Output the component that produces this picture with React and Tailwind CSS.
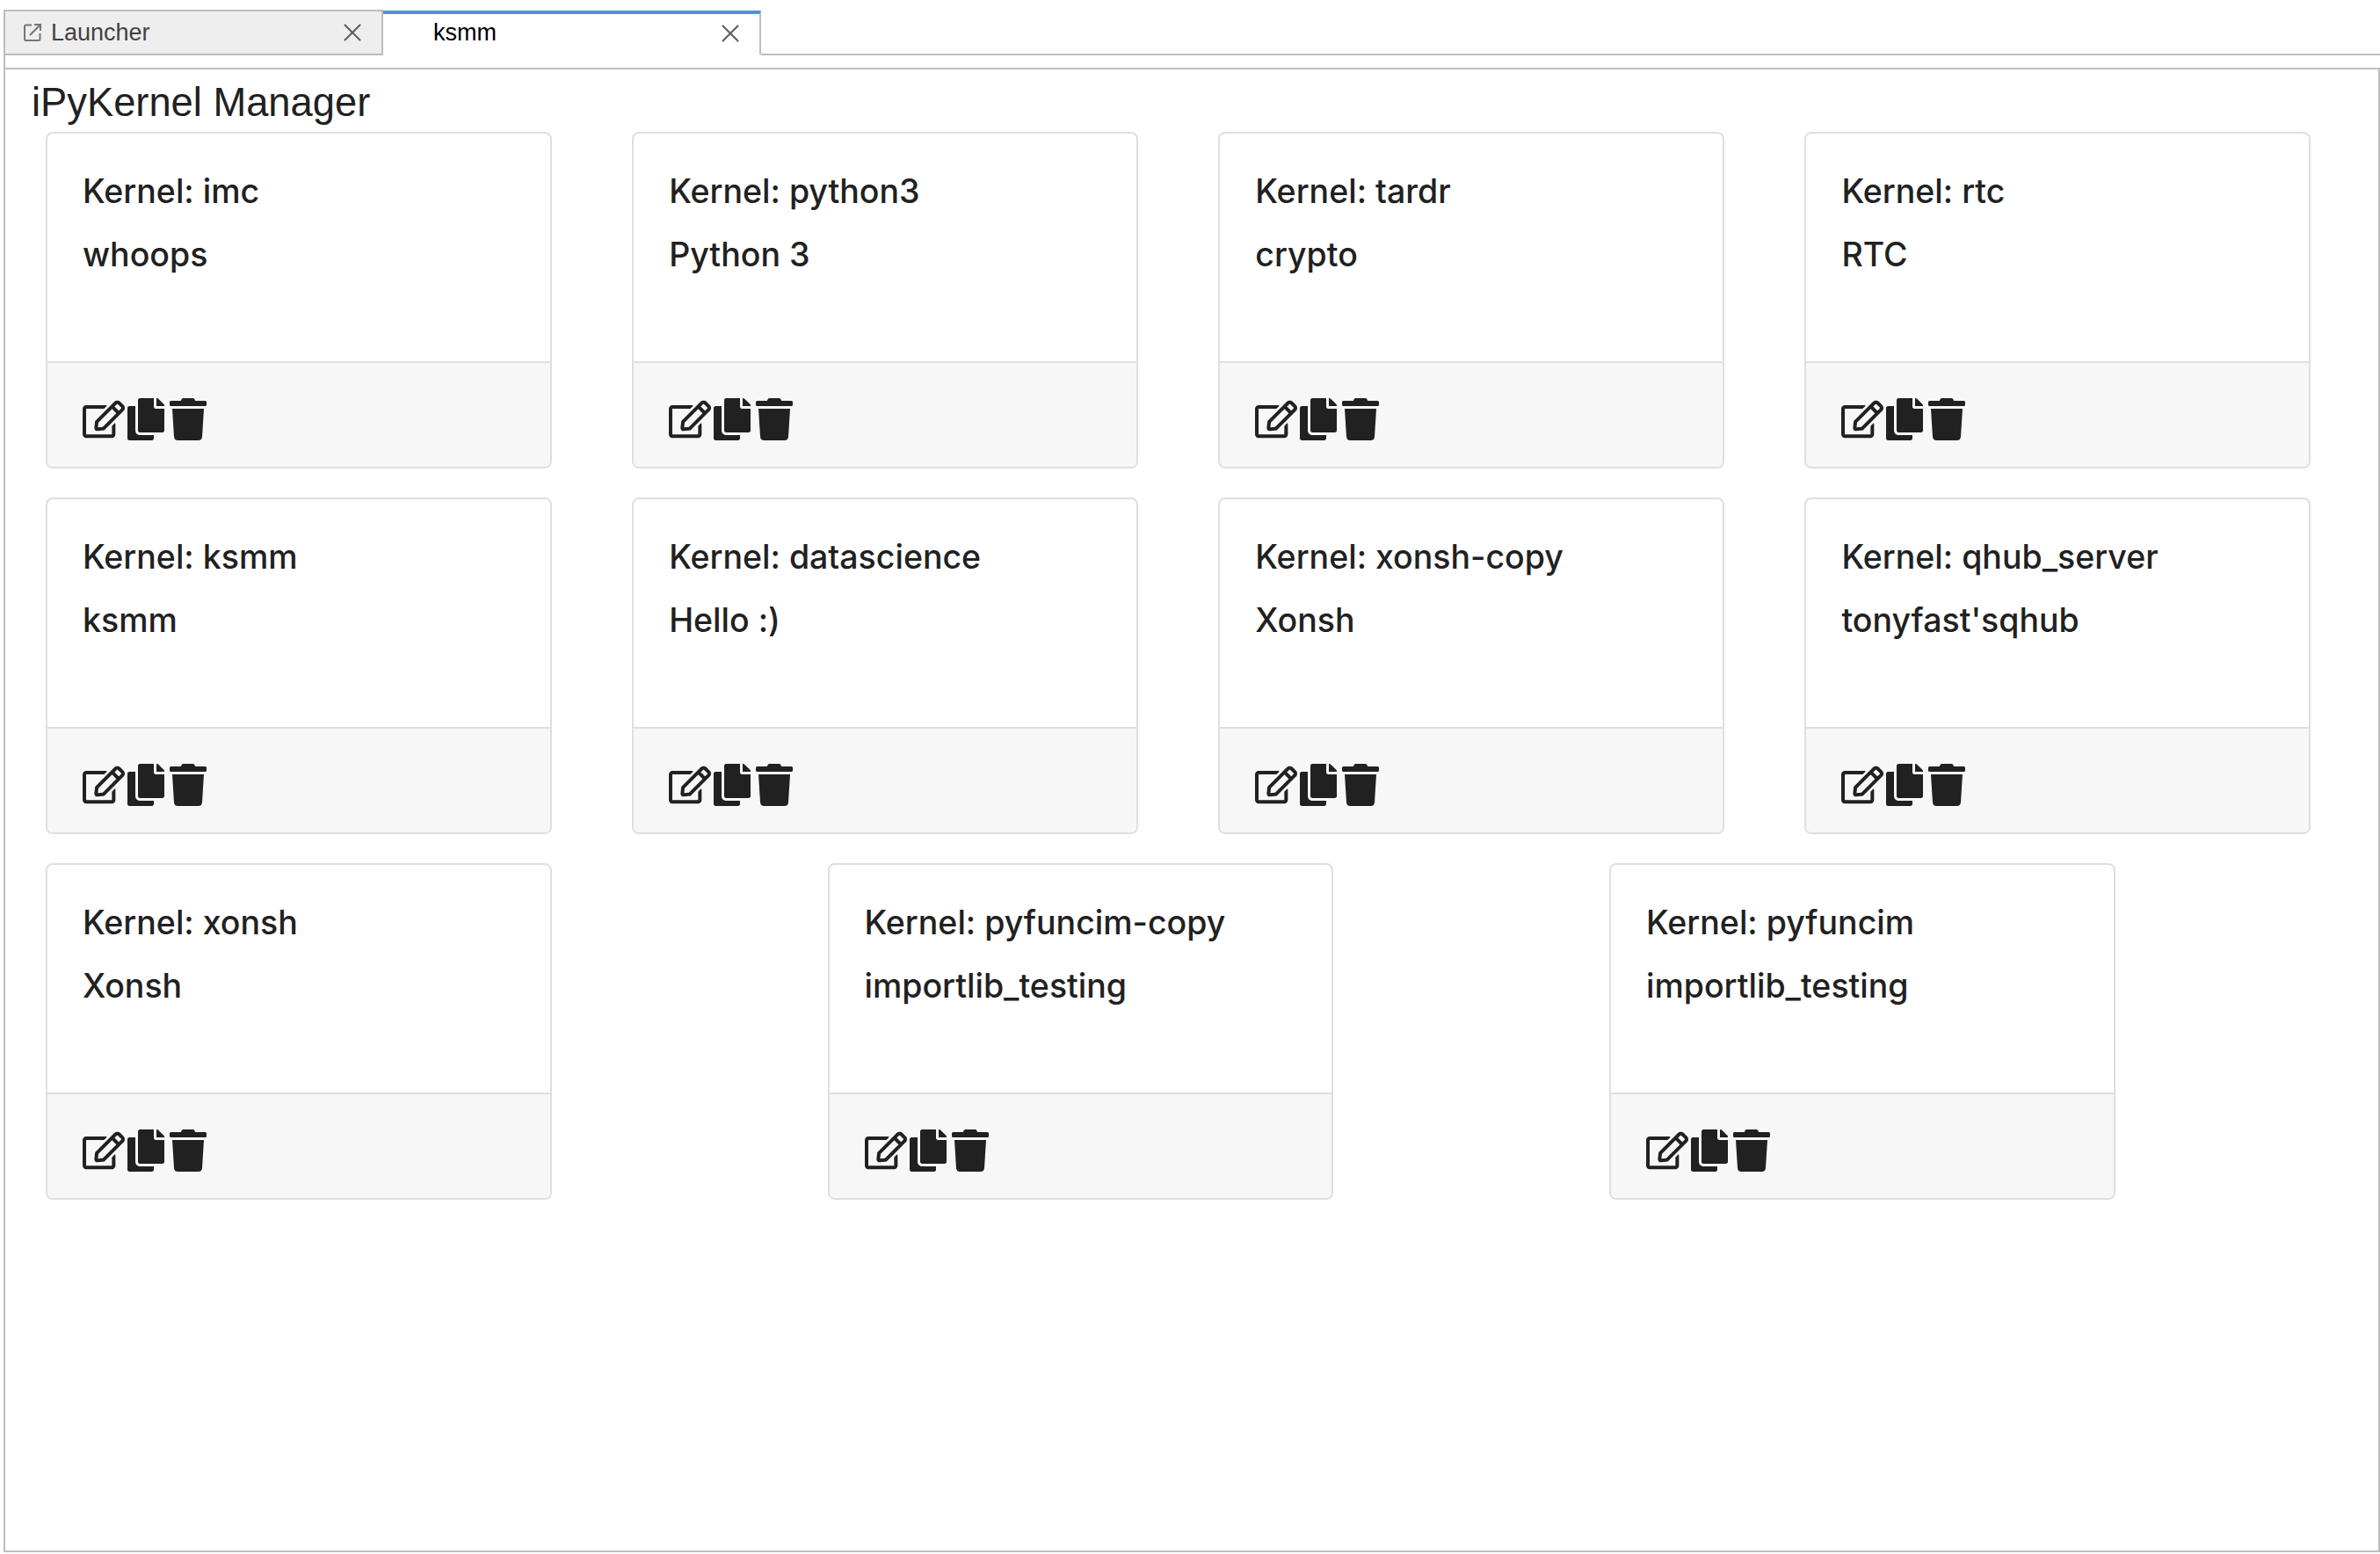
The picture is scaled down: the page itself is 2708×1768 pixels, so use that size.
import React from 'react';
import { FaRegEdit, FaCopy, FaTrash } from 'react-icons/fa';
import { X } from 'lucide-react';

const rows = [
  {
    gap: 'gap-[91.67px]',
    cards: [
      ['imc', 'whoops'],
      ['python3', 'Python 3'],
      ['tardr', 'crypto'],
      ['rtc', 'RTC'],
    ],
  },
  {
    gap: 'gap-[91.67px]',
    cards: [
      ['ksmm', 'ksmm'],
      ['datascience', 'Hello :)'],
      ['xonsh-copy', 'Xonsh'],
      ['qhub_server', "tonyfast'sqhub"],
    ],
  },
  {
    gap: 'gap-[314px]',
    cards: [
      ['xonsh', 'Xonsh'],
      ['pyfuncim-copy', 'importlib_testing'],
      ['pyfuncim', 'importlib_testing'],
    ],
  },
];

const LauncherIcon = () => (
  <svg width="22" height="22" viewBox="0 0 22 22" fill="none" stroke="#757575" strokeWidth="2" className="shrink-0">
    <path d="M19.5 12v6.500a1.500 1.500 0 0 1-1.500 1.500H3.500a1.500 1.500 0 0 1-1.500-1.500V4a1.500 1.500 0 0 1 1.500-1.500H10" />
    <path d="M13 2h7v7M20 2 8 14" />
  </svg>
);

const Tab = ({ active, icon, label, className }) => (
  <div
    className={`flex items-center border-r-2 border-[#bdbdbd] ${
      active
        ? 'bg-white border-t-4 border-t-[#4a94e0] text-black h-[50px] mt-[1px] pb-[3px]'
        : 'bg-[#eeeeee] h-full border-t-2 border-t-[#bdbdbd] border-l-2 border-l-[#bdbdbd] border-b-2 border-b-[#bdbdbd] text-[#424242]'
    } ${className}`}
  >
    {icon}
    <span className="text-[27px] leading-none">{label}</span>
    <X className="ml-auto text-[#616161]" size={34} strokeWidth={1.5} />
  </div>
);

const KernelCard = ({ name, display }) => (
  <div className="w-[575.5px] shrink-0 border-2 border-[#dfdfdf] rounded-lg overflow-hidden bg-white">
    <div className="h-[259px] px-10 pt-[42px] text-[#212121] font-['Inter',sans-serif] font-medium text-[37.5px] leading-[48px]">
      <div className="mb-6">Kernel: {name}</div>
      <div>{display}</div>
    </div>
    <div className="h-[120px] border-t-2 border-[#dfdfdf] bg-[#f7f7f7] px-10 pt-[10px] flex items-center text-[#212121]">
      <FaRegEdit size={48} className="shrink-0" />
      <FaCopy size={48} className="shrink-0" />
      <FaTrash size={48} className="shrink-0" />
    </div>
  </div>
);

export default function App() {
  return (
    <div className="w-[2708px] h-[1768px] bg-white font-['Liberation_Sans',sans-serif] pt-[11px] pb-[2px] pl-[4px] flex flex-col">
      <div className="flex h-[52px] shrink-0 relative">
        <Tab label="Launcher" icon={<span className="ml-[20px] mr-[10px]"><LauncherIcon /></span>} className="w-[432px] pr-[16px]" />
        <Tab active label="ksmm" className="w-[430px] pl-[57px] pr-[16px]" />
        <div className="flex-1 border-b-2 border-[#bdbdbd]" />
      </div>
      <div className="h-[14px] shrink-0 border-l-2 border-[#bdbdbd]" />
      <div className="flex-1 border-2 border-[#bdbdbd] bg-white min-h-0">
        <h1 className="text-[45.3px] leading-[75px] text-[#212121] pl-[30px] h-[71px]">iPyKernel Manager</h1>
        <div className="pl-[46px] flex flex-col gap-[33px]">
          {rows.map((row, i) => (
            <div key={i} className={`flex ${row.gap}`}>
              {row.cards.map(([name, display]) => (
                <KernelCard key={name} name={name} display={display} />
              ))}
            </div>
          ))}
        </div>
      </div>
    </div>
  );
}
